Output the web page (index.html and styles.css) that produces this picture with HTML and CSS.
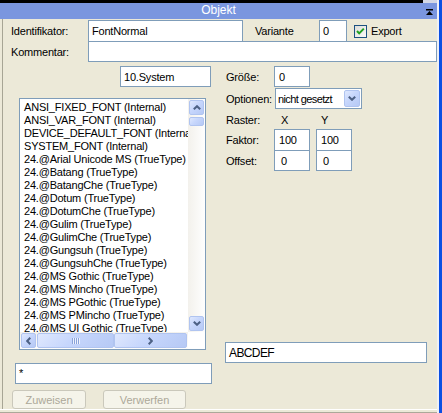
FILE: index.html
```html
<!DOCTYPE html>
<html>
<head>
<meta charset="utf-8">
<link rel="stylesheet" href="styles.css">
</head>
<body>
<div class="screen">
  <div class="window">
    <div class="topstrip"></div>
    <div class="titlebar">
      <span class="title">Objekt</span>
      <svg class="pin" width="7" height="6" viewBox="0 0 7 6"><rect x="0" y="0" width="7" height="1.5" fill="#000"/><polygon points="3.5,2 7,6 0,6" fill="#000"/></svg>
    </div>
    <div class="body">
      <div class="row r1">
        <span class="lbl">Identifikator:</span>
        <div class="tb w-ident">FontNormal</div>
        <span class="lbl-var">Variante</span>
        <div class="tb w-var">0</div>
        <svg class="check" width="13" height="13" viewBox="0 0 13 13">
          <defs><linearGradient id="cg" x1="0" y1="0" x2="1" y2="1"><stop offset="0" stop-color="#dcdcd7"/><stop offset="1" stop-color="#fbfbf9"/></linearGradient></defs>
          <rect x="0.5" y="0.5" width="12" height="12" fill="url(#cg)" stroke="#1c5180"/>
          <polyline points="3,6 5.2,8.4 9.8,3.6" fill="none" stroke="#21a121" stroke-width="2"/>
        </svg>
        <span class="export">Export</span>
      </div>
      <div class="row r2">
        <span class="lbl">Kommentar:</span>
        <div class="tb w-komm"></div>
      </div>
      <div class="main">
        <div class="left">
          <div class="tb sys">10.System</div>
          <div class="listbox">
            <div class="items">
              <div>ANSI_FIXED_FONT (Internal)</div>
              <div>ANSI_VAR_FONT (Internal)</div>
              <div>DEVICE_DEFAULT_FONT (Internal)</div>
              <div>SYSTEM_FONT (Internal)</div>
              <div>24.@Arial Unicode MS (TrueType)</div>
              <div>24.@Batang (TrueType)</div>
              <div>24.@BatangChe (TrueType)</div>
              <div>24.@Dotum (TrueType)</div>
              <div>24.@DotumChe (TrueType)</div>
              <div>24.@Gulim (TrueType)</div>
              <div>24.@GulimChe (TrueType)</div>
              <div>24.@Gungsuh (TrueType)</div>
              <div>24.@GungsuhChe (TrueType)</div>
              <div>24.@MS Gothic (TrueType)</div>
              <div>24.@MS Mincho (TrueType)</div>
              <div>24.@MS PGothic (TrueType)</div>
              <div>24.@MS PMincho (TrueType)</div>
              <div>24.@MS UI Gothic (TrueType)</div>
              <div>24.@SimSun (TrueType)</div>
            </div>
            <div class="vscroll">
              <div class="sbtn"><svg width="8" height="5" viewBox="0 0 8 5"><polyline points="0.8,4.3 4,1.2 7.2,4.3" fill="none" stroke="#4d6185" stroke-width="2"/></svg></div>
              <div class="vthumb"></div>
              <div class="sbtn bottom"><svg width="8" height="5" viewBox="0 0 8 5"><polyline points="0.8,0.7 4,3.8 7.2,0.7" fill="none" stroke="#4d6185" stroke-width="2"/></svg></div>
            </div>
            <div class="hscroll">
              <div class="sbtn"><svg width="5" height="8" viewBox="0 0 5 8"><polyline points="4.3,0.8 1.2,4 4.3,7.2" fill="none" stroke="#4d6185" stroke-width="2"/></svg></div>
              <div class="hthumb"><span class="grip"></span></div>
              <div class="sbtn right"><svg width="5" height="8" viewBox="0 0 5 8"><polyline points="0.7,0.8 3.8,4 0.7,7.2" fill="none" stroke="#4d6185" stroke-width="2"/></svg></div>
            </div>
            <div class="corner"></div>
          </div>
          <div class="tb star">*</div>
          <div class="buttons">
            <div class="btn b-zu">Zuweisen</div>
            <div class="btn b-ver">Verwerfen</div>
          </div>
        </div>
        <div class="right">
          <div class="frow f-size">
            <span class="rlbl">Größe:</span>
            <div class="tb num">0</div>
          </div>
          <div class="frow f-opt">
            <span class="rlbl wide">Optionen:</span>
            <div class="combo">
              <span class="ctext">nicht gesetzt</span>
              <div class="cbtn"><svg width="8" height="5" viewBox="0 0 8 5"><polyline points="0.8,0.7 4,3.8 7.2,0.7" fill="none" stroke="#4d6185" stroke-width="2"/></svg></div>
            </div>
          </div>
          <div class="frow f-raster">
            <span class="rlbl">Raster:</span>
            <span class="axis ax-x">X</span>
            <span class="axis ax-y">Y</span>
          </div>
          <div class="frow f-faktor">
            <span class="rlbl">Faktor:</span>
            <div class="pair">
              <div class="tb num">100</div>
              <div class="tb num">100</div>
            </div>
          </div>
          <div class="frow f-offset">
            <span class="rlbl">Offset:</span>
            <div class="pair">
              <div class="tb num off">0</div>
              <div class="tb num off">0</div>
            </div>
          </div>
          <div class="tb sample">ABCDEF</div>
        </div>
      </div>
    </div>
    <div class="bottomline"></div>
  </div>
  <div class="edge"></div>
</div>
</body>
</html>
```

FILE: styles.css
```css
* { box-sizing: border-box; margin: 0; padding: 0; }
html, body { width: 442px; height: 413px; overflow: hidden; }
body {
  background: #ece9d8;
  font-family: "Liberation Sans", Arial, sans-serif;
  font-size: 11px;
  letter-spacing: -0.2px;
  color: #000;
}
.screen { display: flex; height: 413px; }
.window { width: 437px; height: 413px; display: flex; flex-direction: column; }
.topstrip { height: 3px; background: linear-gradient(90deg, #000 0 423px, #d3d8e6 423px); }
.titlebar {
  height: 16px;
  background: #7a96df;
  color: #fff;
  font-size: 12px;
  line-height: 15px;
  letter-spacing: 0;
  display: grid;
  grid-template-columns: 1fr auto 1fr;
  align-items: start;
}
.title { grid-column: 2; }
.pin { grid-column: 3; justify-self: end; margin: 6px 4px 0 0; }
.body {
  flex: 1;
  margin-left: 2px;
  border-left: 1px solid #a7a595;
  display: flex;
  flex-direction: column;
}
.bottomline {
  height: 4px;
  border-top: 1px solid #fff;
  background: linear-gradient(#ece9d8 0 2px, #aca899 2px);
}
.edge { width: 5px; border-left: 2px solid #eef0f6; background: #0b4fe2; }

.row { display: flex; align-items: center; }
.r1 { margin-top: 1px; height: 22px; }
.r2 { margin-top: -1px; height: 21px; }
.lbl { width: 85px; padding-left: 8px; }
.tb {
  background: #fff;
  border: 1px solid #7f9db9;
  display: flex;
  align-items: center;
  padding-left: 3px;
  white-space: nowrap;
  overflow: hidden;
}
.w-ident { width: 155px; height: 22px; }
.lbl-var { width: 76px; padding-left: 12px; }
.w-var { width: 28px; height: 22px; }
.check { margin-left: 7px; margin-top: 1px; }
.export { margin-left: 4px; }
.w-komm { width: 349px; height: 21px; }

.main { display: flex; }
.left { width: 209px; display: flex; flex-direction: column; align-items: flex-start; }
.right { flex: 1; display: flex; flex-direction: column; align-items: flex-start; }

.sys { margin: 4px 0 0 117px; width: 91px; height: 21px; }
.listbox {
  margin: 11px 0 0 16px;
  width: 187px;
  height: 252px;
  border: 1px solid #7f9db9;
  background: #fff;
  display: grid;
  grid-template-columns: 1fr 17px;
  grid-template-rows: 1fr 17px;
}
.items {
  overflow: hidden;
  padding: 2px 0 0 4px;
  line-height: 13px;
  white-space: nowrap;
}
.vscroll {
  display: flex;
  flex-direction: column;
  padding: 1px;
  background: linear-gradient(90deg, #f3f1ec, #fefefe);
}
.hscroll {
  display: flex;
  padding: 1px;
  background: linear-gradient(#f3f1ec, #fefefe);
}
.corner { background: #fff; }
.sbtn, .vthumb, .hthumb, .cbtn {
  border: 1px solid #b0c4f0;
  border-radius: 2px;
  background: linear-gradient(135deg, #dfe8fe 0%, #c6d6fc 45%, #b6c9f5 100%);
  display: flex;
  align-items: center;
  justify-content: center;
}
.sbtn { width: 15px; height: 15px; }
.sbtn.bottom { margin-top: auto; }
.sbtn.right { margin-left: auto; }
.vthumb { height: 9px; margin-top: 2px; }
.hthumb { width: 77px; margin-left: 1px; }
.grip {
  width: 8px;
  height: 6px;
  background: repeating-linear-gradient(90deg, #8aa3da 0 1px, #eef3fe 1px 2px);
}

.star { margin: 13px 0 0 12px; width: 197px; height: 21px; align-items: flex-start; padding-top: 3px; }
.buttons { margin: 6px 0 0 9px; display: flex; gap: 17px; }
.btn {
  height: 19px;
  border: 1px solid #cac8bb;
  border-radius: 3px;
  background: #f5f4ea;
  color: #aca899;
  display: flex;
  align-items: center;
  justify-content: center;
  letter-spacing: 0;
}
.b-zu { width: 74px; }
.b-ver { width: 83px; }

.frow { display: flex; align-items: center; }
.rlbl { width: 62px; padding-left: 14px; }
.rlbl.wide { width: 63px; }
.f-size { margin-top: 4px; height: 21px; }
.f-size .num { height: 21px; }
.num { width: 36px; padding-left: 4px; }
.f-opt { margin-top: 1px; height: 21px; }
.combo {
  width: 87px;
  height: 21px;
  background: #fff;
  border: 1px solid #7f9db9;
  display: flex;
  align-items: center;
  padding-left: 2px;
  white-space: nowrap;
}
.ctext { letter-spacing: -0.6px; }
.cbtn { margin-left: auto; margin-right: 1px; width: 16px; height: 17px; }
.f-raster { height: 20px; align-items: flex-start; padding-top: 5px; line-height: 13px; }
.axis { width: 36px; }
.ax-x { padding-left: 7px; }
.ax-y { margin-left: 6px; padding-left: 5px; }
.pair { display: flex; gap: 6px; }
.f-faktor { height: 22px; }
.f-faktor .num { height: 22px; }
.f-offset { margin-top: -1px; height: 21px; }
.f-offset .num { height: 21px; }
.num.off { padding-left: 6px; }
.sample { margin: 171px 0 0 13px; width: 202px; height: 21px; font-size: 12px; letter-spacing: -0.6px; }
```
